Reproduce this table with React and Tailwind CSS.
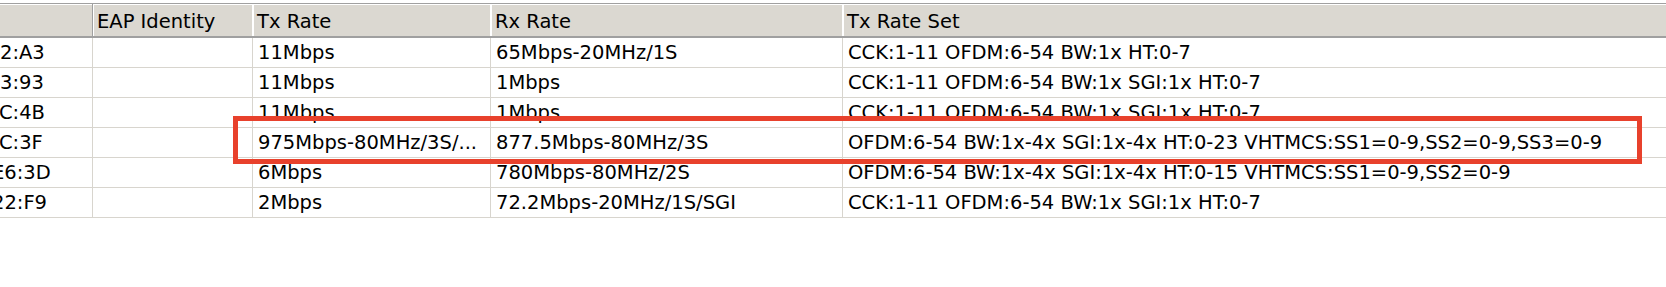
import React from "react";

const FONT = { fontFamily: '"DejaVu Sans", Tahoma, sans-serif' };

const COLS = [
  { key: "mac", title: "", w: "w-[93px]" },
  { key: "eap", title: "EAP Identity", w: "w-[160px]" },
  { key: "tx", title: "Tx Rate", w: "w-[238px]" },
  { key: "rx", title: "Rx Rate", w: "w-[352px]" },
  { key: "set", title: "Tx Rate Set", w: "flex-1" },
];

// The station list is scrolled horizontally, so only the tail of each MAC shows.
const ROWS = [
  { mac: "2:A3", shift: 0, eap: "", tx: "11Mbps", rx: "65Mbps-20MHz/1S", set: "CCK:1-11 OFDM:6-54 BW:1x HT:0-7" },
  { mac: "3:93", shift: 0, eap: "", tx: "11Mbps", rx: "1Mbps", set: "CCK:1-11 OFDM:6-54 BW:1x SGI:1x HT:0-7" },
  { mac: "C:4B", shift: -1, eap: "", tx: "11Mbps", rx: "1Mbps", set: "CCK:1-11 OFDM:6-54 BW:1x SGI:1x HT:0-7" },
  { mac: "C:3F", shift: -1, eap: "", tx: "975Mbps-80MHz/3S/...", rx: "877.5Mbps-80MHz/3S", set: "OFDM:6-54 BW:1x-4x SGI:1x-4x HT:0-23 VHTMCS:SS1=0-9,SS2=0-9,SS3=0-9" },
  { mac: "E6:3D", shift: -8, eap: "", tx: "6Mbps", rx: "780Mbps-80MHz/2S", set: "OFDM:6-54 BW:1x-4x SGI:1x-4x HT:0-15 VHTMCS:SS1=0-9,SS2=0-9" },
  { mac: "22:F9", shift: -8, eap: "", tx: "2Mbps", rx: "72.2Mbps-20MHz/1S/SGI", set: "CCK:1-11 OFDM:6-54 BW:1x SGI:1x HT:0-7" },
];

function HeaderRow() {
  return (
    <div className="flex h-[35px] border-t border-[#a0a0a0] border-b-2 border-b-[#a0a0a0] bg-[#dbd8d1] shadow-[inset_0_1px_0_#ffffff]">
      {COLS.map((c, i) => (
        <div
          key={c.key}
          className={`${c.w} shrink-0 flex items-center pl-[3px] pt-[3px] text-black whitespace-nowrap overflow-hidden ${
            i < COLS.length - 1 ? "border-r border-[#a0a0a0]" : ""
          } ${i > 0 ? "border-l border-white" : ""}`}
        >
          {c.title}
        </div>
      ))}
    </div>
  );
}

function BodyRow({ row }) {
  return (
    <div className="flex h-[30px] border-b border-[#d8d5ce]">
      {COLS.map((c, i) => (
        <div
          key={c.key}
          className={`${c.w} shrink-0 flex items-center pt-[1px] whitespace-nowrap overflow-hidden text-black ${
            i === 0 ? "" : "pl-[5px]"
          } ${i < COLS.length - 1 ? "border-r border-[#d8d5ce]" : ""}`}
        >
          {i === 0 ? <span style={{ marginLeft: row.shift }}>{row.mac}</span> : row[c.key]}
        </div>
      ))}
    </div>
  );
}

export default function App() {
  return (
    <div className="relative w-[1666px] h-[287px] bg-white overflow-hidden pt-[3px] text-[19.5px] leading-none" style={FONT}>
      <HeaderRow />
      <div className="flex flex-col">
        {ROWS.map((r, i) => (
          <BodyRow key={i} row={r} />
        ))}
      </div>
      {/* highlight frame around the VHT station */}
      <div className="absolute left-[233px] top-[116px] w-[1409px] h-[48px] border-[5px] border-[#e8412c] pointer-events-none" />
    </div>
  );
}
